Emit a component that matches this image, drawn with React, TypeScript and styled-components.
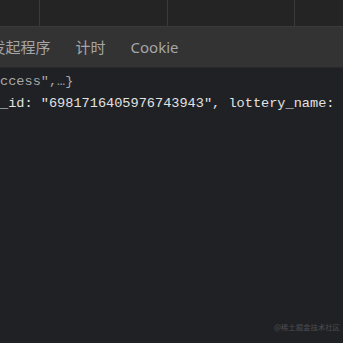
import React from "react";
import styled, { createGlobalStyle } from "styled-components";

const Global = createGlobalStyle`
  html, body { margin: 0; padding: 0; background: #202124; overflow: hidden; }
  #root { width: 343px; height: 343px; }
`;

const Page = styled.div`
  width: 343px;
  height: 343px;
  display: flex;
  flex-direction: column;
  background: #202124;
  overflow: hidden;
`;

const TopBar = styled.div`
  height: 26px;
  flex: none;
  display: flex;
  background: #242424;
  border-bottom: 1px solid #3a3a3a;
`;

const TopCell = styled.div<{ $w: number }>`
  width: ${(p) => p.$w}px;
  flex: none;
  border-right: 1px solid #3a3a3a;
  &:last-child { border-right: none; flex: 1; }
`;

const TabBar = styled.div`
  height: 40px;
  flex: none;
  display: flex;
  align-items: center;
  background: #333333;
  border-bottom: 1px solid #292929;
  overflow: hidden;
`;

const TabStrip = styled.div`
  display: flex;
  margin-left: -22px;
  white-space: nowrap;
`;

const Tab = styled.div`
  padding: 0 12.5px;
  font-family: "Noto Sans", "Noto Sans CJK SC", sans-serif;
  font-size: 15px;
  line-height: 20px;
  color: #a6a6a6;
`;

const Console = styled.div`
  flex: 1;
  position: relative;
  padding-top: 3px;
  font-family: "Liberation Mono", monospace;
  font-size: 13.6px;
  line-height: 22px;
  white-space: pre;
`;

const Line = styled.div<{ $dim?: boolean }>`
  color: ${(p) => (p.$dim ? "#a8a8a8" : "#e2e2e2")};
`;

const Watermark = styled.div`
  position: absolute;
  right: 3px;
  bottom: 5px;
  font-family: "Noto Sans CJK SC", sans-serif;
  font-size: 7.4px;
  color: #4c4d52;
`;

export default function App() {
  return (
    <Page>
      <Global />
      <TopBar>
        <TopCell $w={39} />
        <TopCell $w={127} />
        <TopCell $w={126} />
        <TopCell $w={48} />
      </TopBar>
      <TabBar>
        <TabStrip>
          <Tab>发起程序</Tab>
          <Tab>计时</Tab>
          <Tab>Cookie</Tab>
        </TabStrip>
      </TabBar>
      <Console>
        <Line $dim>{'ccess",…}'}</Line>
        <Line>{'_id: "6981716405976743943", lottery_name:'}</Line>
        <Watermark>@稀土掘金技术社区</Watermark>
      </Console>
    </Page>
  );
}
